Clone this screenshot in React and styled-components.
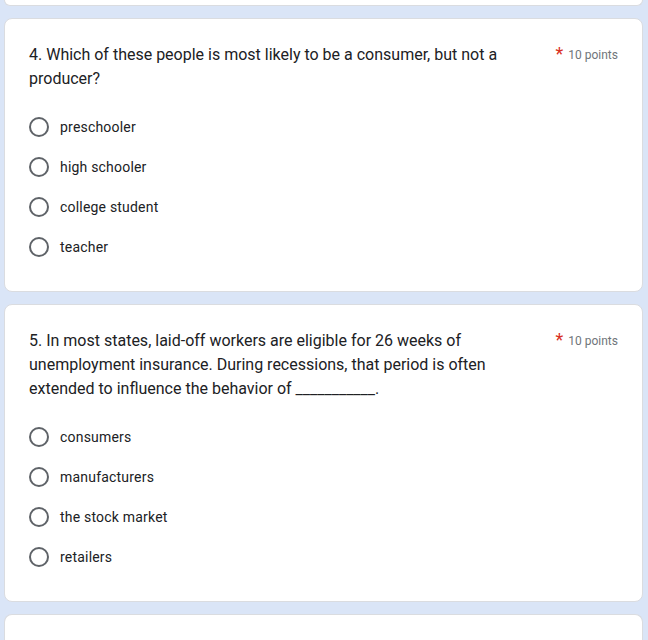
import styled, { createGlobalStyle } from 'styled-components'

const GlobalStyle = createGlobalStyle`
  html, body {
    margin: 0;
    padding: 0;
    background: #dae5f7;
    font-family: Roboto, "Liberation Sans", Arial, sans-serif;
    color: #202124;
  }
`

const questions = [
  {
    title: '4. Which of these people is most likely to be a consumer, but not a producer?',
    points: 10,
    options: ['preschooler', 'high schooler', 'college student', 'teacher'],
  },
  {
    title:
      '5. In most states, laid-off workers are eligible for 26 weeks of unemployment insurance. During recessions, that period is often extended to influence the behavior of ___________.',
    points: 10,
    options: ['consumers', 'manufacturers', 'the stock market', 'retailers'],
  },
]

export default function App() {
  return (
    <>
      <GlobalStyle />
      <Page>
        <Card stub="bottom" />
        {questions.map((q) => (
          <Card key={q.title}>
            <Header>
              <Title>{q.title}</Title>
              <Points>
                <Required>*</Required>
                {q.points} points
              </Points>
            </Header>
            <Options>
              {q.options.map((o) => (
                <Option key={o}>
                  <Radio />
                  <Label>{o}</Label>
                </Option>
              ))}
            </Options>
          </Card>
        ))}
        <Card stub="top" />
      </Page>
    </>
  )
}

const Page = styled.div`
  display: flex;
  flex-direction: column;
  gap: 12px;
  padding: 0 5px 0 4px;
`

const Card = styled.div`
  background: #fff;
  border: 1px solid #dadce0;
  border-radius: 8px;
  padding: 24px 24px 24px;
  ${(p) =>
    p.stub === 'bottom' &&
    `
    border-top: none;
    border-top-left-radius: 0;
    border-top-right-radius: 0;
    padding: 0;
    height: 5px;
  `}
  ${(p) =>
    p.stub === 'top' &&
    `
    border-bottom: none;
    border-bottom-left-radius: 0;
    border-bottom-right-radius: 0;
    padding: 0;
    height: 40px;
  `}
`

const Header = styled.div`
  display: flex;
  align-items: flex-start;
`

const Title = styled.div`
  flex: 1;
  font-size: 16px;
  line-height: 24px;
  letter-spacing: 0;
  padding-right: 24px;
`

const Points = styled.div`
  display: flex;
  align-items: center;
  font-size: 12px;
  color: #70757a;
  line-height: 24px;
  white-space: nowrap;
`

const Required = styled.span`
  color: #d93025;
  font-size: 18px;
  margin-right: 5px;
  position: relative;
  top: -1px;
`

const Options = styled.div`
  display: flex;
  flex-direction: column;
  padding-top: 16px;
`

const Option = styled.label`
  display: flex;
  align-items: center;
  height: 40px;
  gap: 11px;
`

const Radio = styled.span`
  width: 20px;
  height: 20px;
  box-sizing: border-box;
  border: 2px solid #5f6368;
  border-radius: 50%;
  flex-shrink: 0;
`

const Label = styled.span`
  font-size: 14px;
  letter-spacing: 0.2px;
  color: #202124;
`
